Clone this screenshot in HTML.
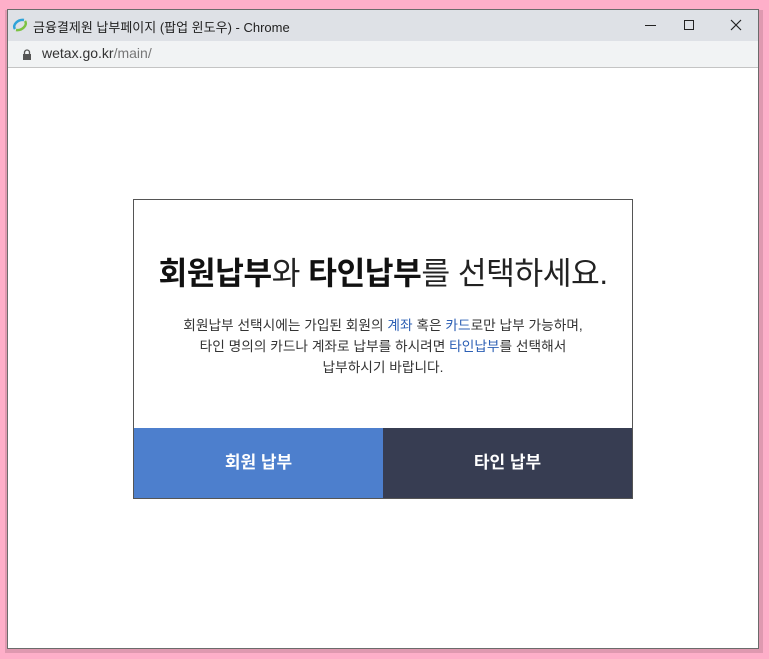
<!DOCTYPE html>
<html><head><meta charset="utf-8"><style>
*{margin:0;padding:0;box-sizing:border-box}
body{width:769px;height:659px;background:#feafc9;position:relative;overflow:hidden;font-family:"Liberation Sans","Noto Sans CJK KR",sans-serif}
.shadow{position:absolute;left:5px;top:10px;width:758px;height:643px;background:rgba(0,0,0,0.12)}
.win{position:absolute;left:7px;top:9px;width:752px;height:640px;border:1px solid #6b6b6b;background:#fff}
.title{position:absolute;left:0;top:0;width:100%;height:31px;background:#dee1e6;font-size:13px;color:#222}
.title .t{position:absolute;left:25px;top:7px}
.addr{position:absolute;left:0;top:31px;width:100%;height:27px;background:#f1f3f4;border-bottom:1px solid #c4c4c4;font-size:14px;color:#333}
.addr .u{position:absolute;left:34px;top:4px}
.addr .u span{color:#777}
.modal{position:absolute;left:133px;top:199px;width:500px;height:300px;border:1px solid #555;background:#fff}
h1{position:absolute;left:0;top:49px;width:100%;text-align:center;font-size:31.3px;font-weight:400;color:#222;letter-spacing:-0.5px}
h1 b{font-weight:700;color:#111}
.p{position:absolute;left:0;top:115px;width:100%;text-align:center;font-size:13.7px;line-height:21px;color:#333}
.p span{color:#2c5fb4}
.b1,.b2{position:absolute;top:228px;height:70px;color:#fff;font-weight:700;font-size:17px;text-align:center;line-height:70px}
.b1{left:0;width:249px;background:#4d7fcd}
.b2{left:249px;width:249px;background:#373d52}
</style></head><body>
<div class="shadow"></div>
<div class="win">
<div class="title">
<svg style="position:absolute;left:4px;top:8px" width="16" height="14" viewBox="0 0 16 14"><path d="M3 11 C0 7 6 1 12 2" stroke="#2fa3d8" stroke-width="2.5" fill="none"/><path d="M13 3 C16 7 10 13 4 12" stroke="#7cc242" stroke-width="2.5" fill="none"/></svg>
<div class="t">금융결제원 납부페이지 (팝업 윈도우) - Chrome</div>
<div style="position:absolute;left:637px;top:15px;width:11px;height:1px;background:#222"></div>
<div style="position:absolute;left:676px;top:10px;width:10px;height:10px;border:1px solid #222"></div>
<svg style="position:absolute;left:722px;top:9px" width="12" height="12"><path d="M1 1L11 11M11 1L1 11" stroke="#222" stroke-width="1.2"/></svg>
</div>
<div class="addr">
<svg style="position:absolute;left:14px;top:8px" width="10" height="11"><rect x="1" y="5" width="8" height="6" fill="#555"/><path d="M2.5 5V3.5a2.5 2.5 0 0 1 5 0V5" stroke="#555" fill="none" stroke-width="1.3"/></svg>
<div class="u">wetax.go.kr<span>/main/</span></div>
</div>
</div>
<div class="modal">
<h1><b>회원납부</b>와 <b>타인납부</b>를 선택하세요.</h1>
<div class="p">회원납부 선택시에는 가입된 회원의 <span>계좌</span> 혹은 <span>카드</span>로만 납부 가능하며,<br>타인 명의의 카드나 계좌로 납부를 하시려면 <span>타인납부</span>를 선택해서<br>납부하시기 바랍니다.</div>
<div class="b1">회원 납부</div>
<div class="b2">타인 납부</div>
</div>
</body></html>
